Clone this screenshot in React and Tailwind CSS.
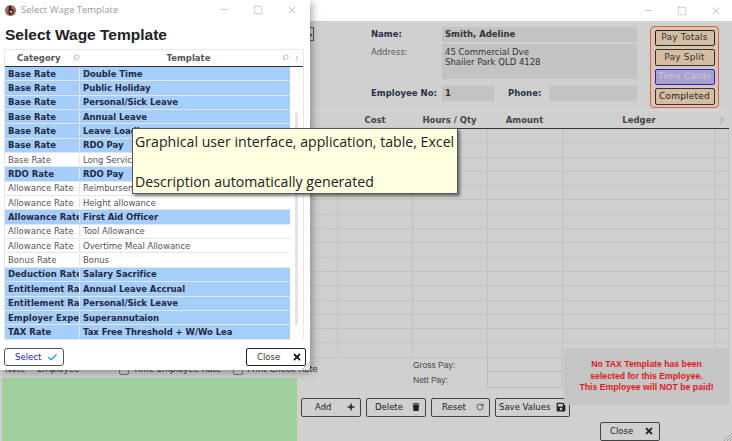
import { Check, ChevronRight, Minus, RotateCw, Search, Square, X } from "lucide-react"
import { FaPlus, FaSave, FaTimes, FaTrash } from "react-icons/fa"

const templates = [
  ["Base Rate", "Double Time", true],
  ["Base Rate", "Public Holiday", true],
  ["Base Rate", "Personal/Sick Leave", true],
  ["Base Rate", "Annual Leave", true],
  ["Base Rate", "Leave Loading", true],
  ["Base Rate", "RDO Pay", true],
  ["Base Rate", "Long Service Leave", false],
  ["RDO Rate", "RDO Pay", true],
  ["Allowance Rate", "Reimbursement", false],
  ["Allowance Rate", "Height allowance", false],
  ["Allowance Rate", "First Aid Officer", true],
  ["Allowance Rate", "Tool Allowance", false],
  ["Allowance Rate", "Overtime Meal Allowance", false],
  ["Bonus Rate", "Bonus", false],
  ["Deduction Rate", "Salary Sacrifice", true],
  ["Entitlement Rate", "Annual Leave Accrual", true],
  ["Entitlement Rate", "Personal/Sick Leave", true],
  ["Employer Expense", "Superannutaion", true],
  ["TAX Rate", "Tax Free Threshold + W/Wo Lea", true],
]

const gridRows = Array.from({ length: 16 })

function WindowControls() {
  return (
    <div className="flex items-center gap-[23px] text-[#8a8a8a]">
      <Minus size={11} strokeWidth={1} />
      <Square size={10} strokeWidth={1} />
      <X size={12} strokeWidth={1} />
    </div>
  )
}

function ResizeGrip({ className }) {
  return (
    <svg width="8" height="8" viewBox="0 0 8 8" className={className}>
      <path d="M8 0 L0 8 M8 3 L3 8 M8 6 L6 8" stroke="#9a9a9a" strokeWidth="0.8" />
    </svg>
  )
}

function PayButton({ children, className }) {
  return (
    <div className={`flex items-center justify-center rounded-[2px] bg-[#d4bda2] text-[9px] tracking-[0.2px] ${className}`}>
      {children}
    </div>
  )
}

function ActionButton({ label, icon, className }) {
  return (
    <div className={`flex h-[19px] items-center justify-between rounded-[2px] border border-[#444] pr-[5px] text-[8.5px] text-[#222] ${className}`}>
      <span>{label}</span>
      {icon}
    </div>
  )
}

function SelectDialog() {
  return (
    <div className="absolute left-0 top-0 flex h-[370px] w-[310px] flex-col bg-white shadow-[2px_2px_8px_rgba(0,0,0,0.35)]">
      <div className="flex h-[19px] items-center justify-between pl-[4px] pr-[12px]">
        <div className="flex items-center gap-[4px] pt-[1px] font-['Open_Sans',sans-serif] text-[9.5px] text-[#9a9a9a]">
          <svg width="13" height="13" viewBox="0 0 13 13">
            <circle cx="6.5" cy="6.5" r="5.5" fill="#a5674f" />
            <path d="M5 2 L7 2 L7 5 C10 4 11 9 7 10.500 C5.500 11 4.500 10 4.500 9 Z" fill="#1c1c2a" />
            <circle cx="7" cy="7.800" r="1.200" fill="#d9c6bd" />
          </svg>
          Select Wage Template
        </div>
        <WindowControls />
      </div>
      <h1 className="mt-[7px] pl-[5px] font-['Liberation_Sans',sans-serif] text-[15.5px] leading-[18px] font-bold text-[#222]">
        Select Wage Template
      </h1>
      <div className="mx-[4px] mt-[5px] flex h-[291px] w-[300px] flex-col border border-[#e6e6e6]">
        <div className="flex h-[17px] shrink-0 items-center border-b border-[#333] text-[8.5px] font-bold text-[#555]">
          <div className="relative w-[75px] pl-[12px]">
            Category
            <Search size={7} className="absolute left-[68px] top-[2px] -scale-x-100 text-[#999]" />
          </div>
          <div className="relative flex-1 pr-[6px] text-center">
            Template
            <Search size={7} className="absolute right-[14px] top-[2px] -scale-x-100 text-[#999]" />
            <ChevronRight size={8} className="absolute right-[2px] top-[2px] text-[#999]" />
          </div>
        </div>
        <div className="flex flex-1">
          <div className="w-[285px] shrink-0">
            {templates.map(([category, template, active], i) => (
              <div
                key={i}
                className={`grid h-[14.35px] grid-cols-[75px_1fr] items-center border-b border-[#e4e6e8] text-[8.5px] leading-[12px] ${active ? "bg-[#a6cefc] font-bold text-[#1f2940]" : "bg-white text-[#555]"}`}
              >
                <div className="overflow-hidden border-r border-[#e4e6e8] pl-[3px] whitespace-nowrap">{category}</div>
                <div className="overflow-hidden pl-[3px] tracking-[-0.05px] whitespace-nowrap">{template}</div>
              </div>
            ))}
          </div>
          <div className="flex flex-1 justify-center bg-white pt-[46px]">
            <div className="h-[212px] w-[3px] bg-[#e4e4e4]" />
          </div>
        </div>
      </div>
      <div className="mt-[8px] flex justify-between px-[4px]">
        <div className="flex h-[18px] w-[60px] items-center justify-between rounded-[3px] border border-[#555] pr-[5px] pl-[10px] text-[8.5px] text-[#2020c0]">
          Select
          <Check size={11} strokeWidth={3} className="text-[#2a9df4]" />
        </div>
        <div className="flex h-[18px] w-[60px] items-center justify-between rounded-[2px] border border-[#222] pr-[3px] pl-[10px] text-[8.5px] text-[#333]">
          Close
          <FaTimes size={10} className="text-[#111]" />
        </div>
      </div>
      <ResizeGrip className="absolute right-0 bottom-0" />
    </div>
  )
}

export default function App() {
  return (
    <div className="relative h-[441px] w-[732px] overflow-hidden bg-[#d0d0d0] font-['DejaVu_Sans',sans-serif]">
      <div className="flex h-[21px] items-center justify-end bg-white pr-[10px]">
        <WindowControls />
      </div>

      <div className="flex h-[89px] pt-[5px] text-[8.5px] text-[#333]">
        <div className="ml-[300px] mt-[1px] flex h-[14px] w-[14px] items-center justify-end border border-[#555] pr-[1px] text-[6px]">▾</div>
        <div className="ml-[57px] flex w-[266px] flex-col pt-[1px]">
          <div className="flex h-[15px] items-center">
            <span className="w-[71px] font-bold text-[#2a3045]">Name:</span>
            <div className="flex h-[15px] w-[195px] items-center bg-[#c3c3c3] pl-[3px] font-bold">Smith, Adeline</div>
          </div>
          <div className="mt-[2px] flex">
            <span className="w-[71px] pt-[2px] text-[#555]">Address:</span>
            <div className="h-[35px] w-[195px] bg-[#c3c3c3] pt-[3px] pl-[3px] leading-[10px]">
              45 Commercial Dve
              <br />
              Shailer Park QLD 4128
            </div>
          </div>
          <div className="mt-[7px] flex h-[15px] items-center">
            <span className="w-[71px] font-bold whitespace-nowrap text-[#2a3045]">Employee No:</span>
            <div className="flex h-[15px] w-[52px] items-center bg-[#c3c3c3] pl-[3px] font-bold">1</div>
            <span className="ml-[14px] w-[41px] font-bold text-[#2a3045]">Phone:</span>
            <div className="h-[15px] w-[88px] bg-[#c3c3c3]" />
          </div>
        </div>
        <div className="ml-[13px] flex h-[82px] w-[69px] flex-col items-center gap-[3px] rounded-[4px] border border-[#e0604f] bg-[#d9c6b0] pt-[3px]">
          <PayButton className="h-[16px] w-[60px] border border-[#222] text-[#333]">Pay Totals</PayButton>
          <PayButton className="h-[17px] w-[60px] border border-[#333] text-[#333]">Pay Split</PayButton>
          <PayButton className="h-[16px] w-[60px] border border-[#2020e0] !bg-[#a8a2cc] text-[#c9c6d8]">Time Cards</PayButton>
          <PayButton className="h-[17px] w-[60px] border border-[#333] text-[#222]">Completed</PayButton>
        </div>
      </div>

      <div className="mr-[3px] border-t border-[#dcdcdc]">
        <div className="grid h-[18px] grid-cols-[337px_75px_75px_75px_152px_1fr] items-center border-b border-[#333] pt-[1px] text-[8.5px] font-bold text-[#444]">
          <div />
          <div className="pl-[1px] text-center">Cost</div>
          <div className="text-center">Hours / Qty</div>
          <div className="text-center">Amount</div>
          <div className="pl-[2px] text-center">Ledger</div>
          <ChevronRight size={10} className="ml-[3px] text-[#888]" />
        </div>
        {gridRows.map((_, i) => (
          <div key={i} className="grid h-[14.3px] grid-cols-[337px_75px_75px_75px_152px_1fr] border-b border-[#c2c2c2]">
            <div />
            <div className="border-l border-[#c2c2c2]" />
            <div className="border-l border-[#c2c2c2]" />
            <div className="border-l border-[#c2c2c2]" />
            <div className="border-l border-[#c2c2c2]" />
            <div className="border-x border-[#c2c2c2]" />
          </div>
        ))}
      </div>

      <div className="flex">
        <div className="w-[297px] shrink-0">
          <div className="flex h-[20px] items-center gap-[12px] pt-[4px] pl-[5px] text-[8.5px] whitespace-nowrap text-[#333]">
            <span className="shrink-0">Note</span>
            <span className="w-[70px] shrink-0">Employee</span>
            <span className="flex shrink-0 items-center gap-[4px]">
              <span className="h-[10px] w-[10px] rounded-[2px] border border-[#777]" />
              <span className="w-[88px]">Time Employee Rate</span>
            </span>
            <span className="flex shrink-0 items-center gap-[4px]">
              <span className="h-[10px] w-[10px] rounded-[2px] border border-[#777]" />
              <span>Print Check Rate</span>
            </span>
          </div>
          <div className="ml-[2px] h-[63px] bg-[#a0d09e]" />
        </div>
        <div className="flex flex-1 flex-col">
          <div className="ml-[116px] flex h-[30px] font-['Liberation_Sans',sans-serif] text-[8.5px] text-[#444]">
            <div className="flex w-[74px] flex-col gap-[5px] pt-[2px] leading-[10px]">
              <span>Gross Pay:</span>
              <span>Nett Pay:</span>
            </div>
            <div className="w-[76px] border-x border-b border-[#bcbcbc]">
              <div className="h-[14px] border-b border-[#bcbcbc]" />
            </div>
          </div>
          <div className="mt-[10px] ml-[4px] flex gap-[5px]">
            <ActionButton label="Add" className="w-[60px] pl-[13px]" icon={<FaPlus size={8} className="text-[#222]" />} />
            <ActionButton label="Delete" className="w-[60px] pl-[8px]" icon={<FaTrash size={8} className="text-[#222]" />} />
            <ActionButton label="Reset" className="w-[59px] pl-[10px]" icon={<RotateCw size={8} strokeWidth={2} className="text-[#222]" />} />
            <ActionButton label="Save Values" className="w-[75px] pl-[3px] !pr-[3px] whitespace-nowrap" icon={<FaSave size={10} className="text-[#222]" />} />
          </div>
          <div className="mt-[5px] ml-[303px]">
            <ActionButton label="Close" className="w-[60px] pl-[9px]" icon={<FaTimes size={10} className="text-[#222]" />} />
          </div>
        </div>
      </div>

      <div className="absolute left-[564px] top-[348px] flex h-[57px] w-[165px] flex-col items-center justify-center bg-[#c5c5c5] font-['Liberation_Sans',sans-serif] text-[8.7px] leading-[11.5px] font-bold text-[#e01818]">
        <span>No TAX Template has been</span>
        <span>selected for this Employee.</span>
        <span>This Employee will NOT be paid!</span>
      </div>

      <ResizeGrip className="absolute right-0 bottom-0" />

      <SelectDialog />

      <div className="absolute left-[132px] top-[128px] h-[66px] w-[326px] border border-[#555] bg-[#ffffe1] pl-[2px] font-['Open_Sans',sans-serif] text-[14.15px] leading-[20px] text-[#222] shadow-[2px_2px_3px_rgba(0,0,0,0.5)]">
        <div className="pt-[3px] whitespace-nowrap">Graphical user interface, application, table, Excel</div>
        <div className="pt-[20px] whitespace-nowrap">Description automatically generated</div>
      </div>
    </div>
  )
}
